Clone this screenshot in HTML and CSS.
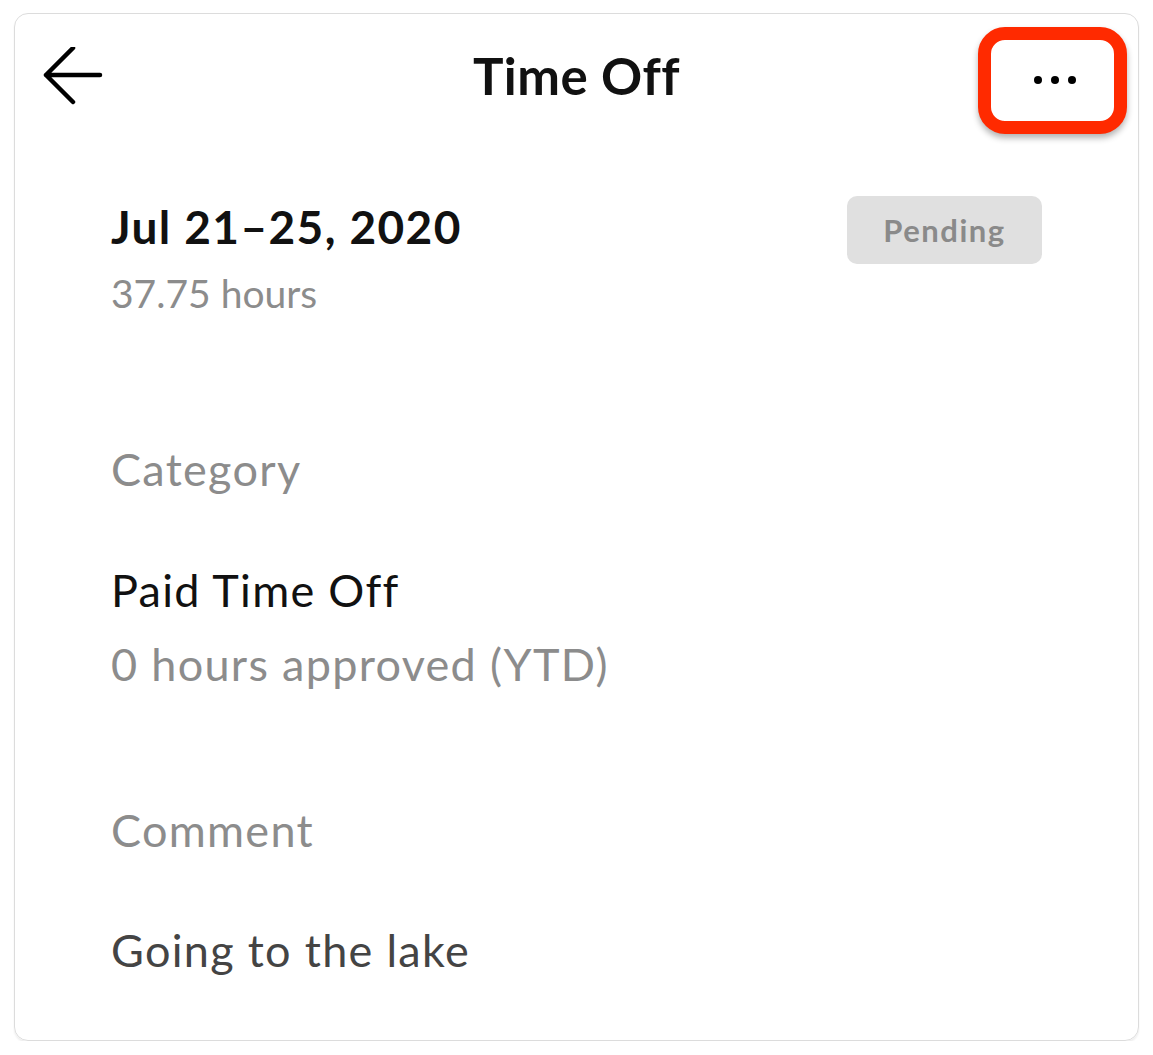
FILE: index.html
```html
<!DOCTYPE html>
<html lang="en">
<head>
<meta charset="utf-8">
<title>Time Off</title>
<link rel="stylesheet" href="styles.css">
</head>
<body>
<div class="card">
  <header class="topbar">
    <button class="back" aria-label="Back">
      <svg width="60" height="60" viewBox="0 0 60 60"><path d="M57 28H3M30 1L3 28l27 27" fill="none" stroke="#000" stroke-width="4.5" stroke-linecap="round" stroke-linejoin="round"/></svg>
    </button>
    <h1 class="title">Time Off</h1>
    <div class="menu-wrap">
      <button class="menu" aria-label="More">
        <svg width="44" height="10" viewBox="0 0 44 10"><circle cx="5" cy="5" r="4"/><circle cx="22" cy="5" r="4"/><circle cx="39" cy="5" r="4"/></svg>
      </button>
    </div>
  </header>
  <section class="summary">
    <div class="summary-text">
      <div class="dates">Jul 21–25, 2020</div>
      <div class="hours">37.75 hours</div>
    </div>
    <div class="badge">Pending</div>
  </section>
  <section class="group group-category">
    <div class="label">Category</div>
    <div class="value">Paid Time Off</div>
    <div class="sub">0 hours approved (YTD)</div>
  </section>
  <section class="group group-comment">
    <div class="label">Comment</div>
    <div class="value comment">Going to the lake</div>
  </section>
</div>
</body>
</html>
```
FILE: styles.css
```css
html, body {
  margin: 0;
  padding: 0;
  background: #fff;
}
body {
  font-family: Lato, "Open Sans", sans-serif;
  color: #111;
}
.card {
  margin: 13px 14px 0 14px;
  height: 1028px;
  border: 1px solid #dcdcdc;
  border-radius: 14px;
  box-shadow: 0 2px 2px rgba(0,0,0,0.07);
  box-sizing: border-box;
}
.topbar {
  display: grid;
  grid-template-columns: 1fr auto 1fr;
  align-items: start;
  height: 120px;
}
.back {
  justify-self: start;
  margin: 33px 0 0 28px;
  background: none;
  border: 0;
  padding: 0;
  display: flex;
}
.title {
  margin: 31px 0 0 0;
  font-size: 51px;
  line-height: 1.2;
  font-weight: 700;
  letter-spacing: 0.5px;
}
.menu-wrap {
  justify-self: end;
  margin: 13px 11px 0 0;
}
.menu {
  width: 149px;
  height: 107px;
  box-sizing: border-box;
  border: 13px solid #ff2a00;
  border-radius: 27px;
  background: #fff;
  box-shadow: 0 4px 6px rgba(0,0,0,0.3);
  display: flex;
  align-items: center;
  justify-content: center;
  padding: 0 0 2px 4px;
}
.summary {
  display: flex;
  justify-content: space-between;
  align-items: flex-start;
  padding: 65px 96px 0 96px;
}
.dates {
  font-size: 46px;
  font-weight: 700;
  line-height: 1.2;
  letter-spacing: 1.4px;
}
.hours {
  font-size: 39px;
  color: #8c8c8c;
  line-height: 1.2;
  margin-top: 16px;
}
.badge {
  width: 195px;
  height: 68px;
  background: #e0e0e0;
  border-radius: 10px;
  color: #8a8a8a;
  font-weight: 700;
  font-size: 31px;
  letter-spacing: 1.5px;
  display: flex;
  align-items: center;
  justify-content: center;
  margin-top: -3px;
}
.group {
  padding: 0 96px;
}
.label,
.value,
.sub {
  font-size: 45px;
  line-height: 1.2;
  letter-spacing: 1.3px;
}
.group-category {
  margin-top: 125px;
}
.group-comment {
  margin-top: 112px;
}
.label {
  color: #8c8c8c;
}
.value {
  color: #111;
  margin-top: 67px;
}
.sub {
  color: #8c8c8c;
  margin-top: 20px;
}
.group-comment .value {
  margin-top: 66px;
}
.comment {
  color: #444;
}
```
